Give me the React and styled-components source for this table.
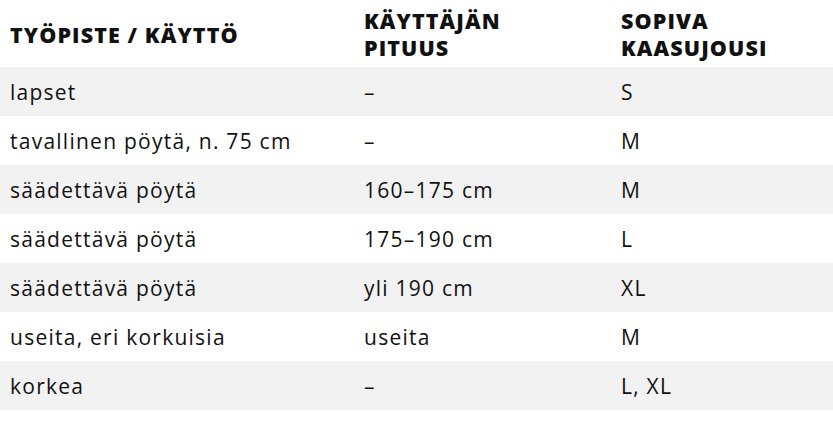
import React from 'react'
import styled, { createGlobalStyle } from 'styled-components'

const rows = [
  ['lapset', '–', 'S'],
  ['tavallinen pöytä, n. 75 cm', '–', 'M'],
  ['säädettävä pöytä', '160–175 cm', 'M'],
  ['säädettävä pöytä', '175–190 cm', 'L'],
  ['säädettävä pöytä', 'yli 190 cm', 'XL'],
  ['useita, eri korkuisia', 'useita', 'M'],
  ['korkea', '–', 'L, XL'],
]

function App() {
  return (
    <>
      <Global />
      <Table>
        <HeadRow>
          <HeadCell>Työpiste / käyttö</HeadCell>
          <HeadCell>Käyttäjän<br />pituus</HeadCell>
          <HeadCell>Sopiva<br />kaasujousi</HeadCell>
        </HeadRow>
        {rows.map((r, i) => (
          <Row key={i} striped={i % 2 === 0}>
            {r.map((c, j) => <Cell key={j}>{c}</Cell>)}
          </Row>
        ))}
      </Table>
    </>
  )
}

export default App

const Global = createGlobalStyle`
 body {
  margin: 0;
  background: #fff;
  font-family: "Open Sans", sans-serif;
  color: #111;
 }
`

const Table = styled.div`
 width: 833px;
 display: flex;
 flex-direction: column;
`

const HeadRow = styled.div`
 display: grid;
 grid-template-columns: 354px 257px 1fr;
 height: 67px;
 align-items: center;
`

const HeadCell = styled.div`
 padding: 1px 10px 0;
 font-weight: 800;
 font-size: 21.5px;
 line-height: 27px;
 letter-spacing: 1.1px;
 text-transform: uppercase;
`

const Row = styled.div`
 display: grid;
 grid-template-columns: 354px 257px 1fr;
 height: 49px;
 align-items: center;
 background: ${(p) => (p.striped ? '#f2f2f2' : '#fff')};
`

const Cell = styled.div`
 padding: 0 10px;
 font-size: 21px;
 line-height: 24px;
 letter-spacing: 1.25px;
`
